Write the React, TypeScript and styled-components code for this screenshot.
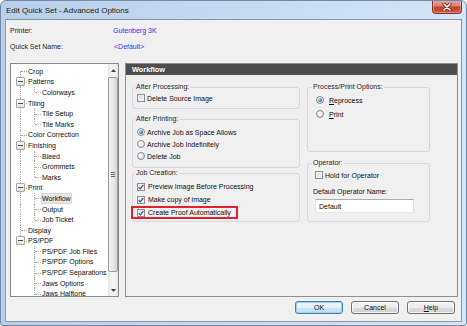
import React from 'react';
import styled, { createGlobalStyle, css } from 'styled-components';

const FONT = `"Liberation Sans", Arial, sans-serif`;

const GlobalStyle = createGlobalStyle`
  html, body { margin: 0; padding: 0; background: #ffffff; }
  body { font-family: ${FONT}; font-size: 7px; color: #0e0e0e; }
  * { box-sizing: border-box; }
`;

const Window = styled.div`
  width: 467px;
  height: 326px;
  border: 1px solid #6f8aae;
  border-radius: 6px 6px 3px 3px;
  background: linear-gradient(to right, #b8cfe9 0%, #c6daf0 50%, #d5e5f6 100%);
  padding: 0 4px 3px 4px;
  display: flex;
  flex-direction: column;
  overflow: hidden;
`;

const TitleBar = styled.div`
  height: 18px;
  flex: none;
  display: flex;
  align-items: center;
  padding-left: 1px;
`;

const Title = styled.span`
  flex: 1;
  font-size: 8px;
  color: #1a1a1a;
`;

const CloseButton = styled.div`
  align-self: flex-start;
  margin-top: -1px;
  width: 30px;
  height: 14px;
  border: 1px solid #84332a;
  border-top: none;
  border-radius: 0 0 4px 4px;
  background: linear-gradient(to bottom, #e8a79c 0%, #d9806f 45%, #c2402e 55%, #cf5a45 100%);
  box-shadow: inset 0 0 0 1px rgba(255, 255, 255, 0.3);
  display: flex;
  align-items: center;
  justify-content: center;
`;

const Client = styled.div`
  flex: 1;
  background: #f0f0f0;
  border: 1px solid #8596ad;
  padding: 2px 3px 7px 4px;
  display: flex;
  flex-direction: column;
`;

const InfoGrid = styled.div`
  display: grid;
  grid-template-columns: 103px 1fr;
  grid-auto-rows: 16px;
  align-items: center;
`;

const InfoLabel = styled.span`
  color: #1a1a1a;
`;

const InfoValue = styled.span<{ $shift?: number }>`
  color: #3535ea;
  padding-left: ${(p) => p.$shift ?? 0}px;
`;

const Main = styled.div`
  display: flex;
  gap: 6px;
  margin-top: 9px;
  height: 234px;
  flex: none;
`;

/* ---------- tree ---------- */

const TreeBox = styled.div`
  width: 109px;
  flex: none;
  border: 1px solid #828790;
  background: #ffffff;
  display: flex;
  overflow: hidden;
`;

const TreeList = styled.div`
  flex: 1;
  padding: 2px 0 0 2px;
  overflow: hidden;
`;

const TreeRow = styled.div`
  display: flex;
  height: 10.6px;
`;

const LINE = '#a8a8a8';

const Indent = styled.span<{ $line?: boolean }>`
  position: relative;
  width: 14px;
  height: 100%;
  flex: none;
  ${(p) =>
    p.$line &&
    css`
      &::before {
        content: '';
        position: absolute;
        left: 7px;
        top: 0;
        bottom: 0;
        border-left: 1px dotted ${LINE};
      }
    `}
`;

const Connector = styled.span<{ $first?: boolean; $last?: boolean }>`
  position: relative;
  width: 14px;
  height: 100%;
  flex: none;
  display: flex;
  align-items: center;
  &::before {
    content: '';
    position: absolute;
    left: 7px;
    top: ${(p) => (p.$first ? '50%' : '0')};
    bottom: ${(p) => (p.$last ? '50%' : '0')};
    border-left: 1px dotted ${LINE};
  }
  &::after {
    content: '';
    position: absolute;
    left: 8px;
    right: 0;
    top: 50%;
    border-top: 1px dotted ${LINE};
  }
`;

const Expander = styled.span`
  position: relative;
  z-index: 1;
  margin-left: 3px;
  width: 9px;
  height: 9px;
  border: 1px solid #a6a6a6;
  border-radius: 1px;
  background: linear-gradient(to bottom, #ffffff, #e2e2e2);
  display: flex;
  align-items: center;
  justify-content: center;
  &::after {
    content: '';
    width: 5px;
    height: 1px;
    background: #4a4a4a;
  }
`;

const NodeLabel = styled.span<{ $selected?: boolean }>`
  height: 100%;
  padding: 0 1px;
  display: flex;
  align-items: center;
  white-space: nowrap;
  ${(p) =>
    p.$selected &&
    css`
      background: #e7e7e7;
      box-shadow: inset 0 0 0 1px #d8d8d8;
      border-radius: 2px;
    `}
`;

const ScrollBar = styled.div`
  width: 10px;
  flex: none;
  display: flex;
  flex-direction: column;
  background: linear-gradient(to right, #e4e4e4, #f3f3f3 30%, #f3f3f3 70%, #e7e7e7);
`;

const ScrollArrow = styled.div`
  height: 12px;
  flex: none;
  display: flex;
  align-items: center;
  justify-content: center;
`;

const ScrollTrack = styled.div`
  flex: 1;
  padding-top: 1px;
`;

const Thumb = styled.div`
  height: 195px;
  border: 1px solid #9a9a9a;
  border-radius: 2px;
  background: linear-gradient(to right, #f3f3f3, #e6e6e6 50%, #d8d8d8);
  display: flex;
  align-items: center;
  justify-content: center;
`;

const Grip = styled.span`
  width: 4px;
  height: 5px;
  background: repeating-linear-gradient(to bottom, #6c6c6c 0 1px, transparent 1px 2px);
`;

/* ---------- panel ---------- */

const Panel = styled.section`
  width: 333px;
  flex: none;
  border: 1px solid #8e8e8e;
  background: #f0f0f0;
  display: flex;
  flex-direction: column;
`;

const PanelHeader = styled.div`
  height: 11px;
  flex: none;
  background: #4e4e4e;
  color: #ffffff;
  font-weight: bold;
  font-size: 7.4px;
  padding-left: 6px;
  display: flex;
  align-items: center;
`;

const PanelBody = styled.div`
  display: grid;
  grid-template-columns: 168px 123px;
  column-gap: 7px;
  padding-left: 6px;
  align-items: start;
`;

const Column = styled.div`
  display: flex;
  flex-direction: column;
`;

const Group = styled.div<{ $mt: number; $pl: number; $pb: number }>`
  margin-top: ${(p) => p.$mt}px;
  border: 1px solid #d5d9dd;
  border-radius: 3px;
  padding: 0 4px ${(p) => p.$pb}px ${(p) => p.$pl}px;
  display: flex;
  flex-direction: column;
`;

const Legend = styled.div<{ $ml: number }>`
  align-self: flex-start;
  margin: -6px 0 0 ${(p) => p.$ml}px;
  height: 10px;
  line-height: 10px;
  padding: 0 1px;
  background: #f0f0f0;
  color: #1e1e1e;
  white-space: nowrap;
`;

const OptionList = styled.div<{ $mt: number }>`
  margin-top: ${(p) => p.$mt}px;
  display: flex;
  flex-direction: column;
`;

const OptionRow = styled.div<{ $h: number; $gap: number }>`
  position: relative;
  height: ${(p) => p.$h}px;
  display: flex;
  align-items: center;
  gap: ${(p) => p.$gap}px;
  white-space: nowrap;
`;

const Highlight = styled.span`
  position: absolute;
  left: -6px;
  top: 0;
  width: 107px;
  height: 13px;
  border: 2px solid #e3232c;
  pointer-events: none;
`;

const CheckBox = styled.span`
  width: 8px;
  height: 8px;
  flex: none;
  border: 1px solid #8e8f8f;
  background: linear-gradient(135deg, #d4d4d4 0%, #ececec 60%, #f8f8f8 100%);
  box-shadow: inset 0 0 0 1px #f3f3f3;
  display: flex;
  align-items: center;
  justify-content: center;
`;

const RadioMark = styled.span<{ $checked?: boolean }>`
  width: 8px;
  height: 8px;
  flex: none;
  border-radius: 50%;
  border: 1px solid #8b8b8b;
  background: radial-gradient(circle at 35% 35%, #fdfdfd, #e3e3e3 65%, #cdcdcd);
  display: flex;
  align-items: center;
  justify-content: center;
  ${(p) =>
    p.$checked &&
    css`
      &::after {
        content: '';
        width: 4px;
        height: 4px;
        border-radius: 50%;
        background: radial-gradient(circle at 35% 35%, #a6e2ff, #2f84c8 55%, #154f86);
      }
    `}
`;

const FieldLabel = styled.div`
  margin: 5px 0 0 -2px;
  height: 11px;
  line-height: 11px;
  white-space: nowrap;
`;

const TextField = styled.input`
  margin-top: 2px;
  width: 99px;
  height: 14px;
  border: 1px solid #abadb3;
  border-color: #abadb3 #dbdfe6 #e3e9ef #e2e3ea;
  padding: 0 3px;
  font: 7px ${FONT};
  color: #0e0e0e;
  background: #ffffff;
  outline: none;
`;

const Key = styled.span`
  text-decoration: underline;
`;

/* ---------- buttons ---------- */

const ButtonRow = styled.div`
  margin-top: 4px;
  display: flex;
  justify-content: flex-end;
  gap: 8px;
  padding-right: 3px;
`;

const DialogButton = styled.button<{ $default?: boolean }>`
  width: 48px;
  height: 13px;
  padding: 0;
  font: 7px ${FONT};
  color: #0e0e0e;
  border: 1px solid #707070;
  border-radius: 3px;
  background: linear-gradient(to bottom, #f2f2f2 0%, #ebebeb 50%, #dddddd 51%, #cfcfcf 100%);
  box-shadow: inset 0 0 0 1px rgba(255, 255, 255, 0.75);
  ${(p) =>
    p.$default &&
    css`
      border-color: #3c7fb1;
      background: linear-gradient(to bottom, #edf6fb 0%, #e2eff7 50%, #d2e5f1 51%, #c3dcec 100%);
      box-shadow: inset 0 0 0 1px #9fd2f0;
    `}
`;

/* ---------- data ---------- */

type TreeNode = { label: string; children?: string[]; more?: boolean };

const TREE: TreeNode[] = [
  { label: 'Crop' },
  { label: 'Patterns', children: ['Colorways'] },
  { label: 'Tiling', children: ['Tile Setup', 'Tile Marks'] },
  { label: 'Color Correction' },
  { label: 'Finishing', children: ['Bleed', 'Grommets', 'Marks'] },
  { label: 'Print', children: ['Workflow', 'Output', 'Job Ticket'] },
  { label: 'Display' },
  {
    label: 'PS/PDF',
    children: ['PS/PDF Job Files', 'PS/PDF Options', 'PS/PDF Separations', 'Jaws Options', 'Jaws Halftone'],
    more: true,
  },
];

const CheckIcon = () => (
  <svg width="6" height="6" viewBox="0 0 6 6">
    <path d="M0.6 3.1 L2.3 4.9 L5.4 0.8" fill="none" stroke="#3d5283" strokeWidth="1.2" />
  </svg>
);

const CloseIcon = () => (
  <svg width="10" height="8" viewBox="0 0 10 8">
    <path d="M2 1 L8 7 M8 1 L2 7" stroke="#5b1b14" strokeWidth="3" strokeLinecap="round" />
    <path d="M2 1 L8 7 M8 1 L2 7" stroke="#ffffff" strokeWidth="1.6" strokeLinecap="round" />
  </svg>
);

const ArrowIcon = ({ up }: { up?: boolean }) => (
  <svg width="5" height="3" viewBox="0 0 5 3">
    <polygon points={up ? '0,3 5,3 2.5,0' : '0,0 5,0 2.5,3'} fill="#404040" />
  </svg>
);

const Tree = () => (
  <TreeBox>
    <TreeList>
      {TREE.map((node, i) => {
        const lastRoot = i === TREE.length - 1;
        return (
          <React.Fragment key={node.label}>
            <TreeRow>
              <Connector $first={i === 0} $last={lastRoot}>
                {node.children && <Expander />}
              </Connector>
              <NodeLabel>{node.label}</NodeLabel>
            </TreeRow>
            {node.children?.map((child, j) => (
              <TreeRow key={child}>
                <Indent $line={!lastRoot} />
                <Connector $last={j === node.children!.length - 1 && !node.more} />
                <NodeLabel $selected={child === 'Workflow'}>{child}</NodeLabel>
              </TreeRow>
            ))}
          </React.Fragment>
        );
      })}
    </TreeList>
    <ScrollBar>
      <ScrollArrow>
        <ArrowIcon up />
      </ScrollArrow>
      <ScrollTrack>
        <Thumb>
          <Grip />
        </Thumb>
      </ScrollTrack>
      <ScrollArrow>
        <ArrowIcon />
      </ScrollArrow>
    </ScrollBar>
  </TreeBox>
);

const Check = ({ label, checked, gap = 2, h, highlight }: { label: string; checked?: boolean; gap?: number; h: number; highlight?: boolean }) => (
  <OptionRow $h={h} $gap={gap}>
    <CheckBox>{checked && <CheckIcon />}</CheckBox>
    <span>{label}</span>
    {highlight && <Highlight />}
  </OptionRow>
);

const Radio = ({ children, checked, gap = 2, h }: { children: React.ReactNode; checked?: boolean; gap?: number; h: number }) => (
  <OptionRow $h={h} $gap={gap}>
    <RadioMark $checked={checked} />
    <span>{children}</span>
  </OptionRow>
);

export default function App() {
  return (
    <>
      <GlobalStyle />
      <Window>
        <TitleBar>
          <Title>Edit Quick Set - Advanced Options</Title>
          <CloseButton>
            <CloseIcon />
          </CloseButton>
        </TitleBar>
        <Client>
          <InfoGrid>
            <InfoLabel>Printer:</InfoLabel>
            <InfoValue>Gutenberg 3K</InfoValue>
            <InfoLabel>Quick Set Name:</InfoLabel>
            <InfoValue $shift={1}>&lt;Default&gt;</InfoValue>
          </InfoGrid>
          <Main>
            <Tree />
            <Panel>
              <PanelHeader>Workflow</PanelHeader>
              <PanelBody>
                <Column>
                  <Group $mt={12} $pl={4} $pb={4}>
                    <Legend $ml={-2}>After Processing:</Legend>
                    <OptionList $mt={0}>
                      <Check h={12} label="Delete Source Image" />
                    </OptionList>
                  </Group>
                  <Group $mt={10} $pl={4} $pb={5}>
                    <Legend $ml={-2}>After Printing:</Legend>
                    <OptionList $mt={2}>
                      <Radio h={12} checked>Archive Job as Space Allows</Radio>
                      <Radio h={12}>Archive Job Indefinitely</Radio>
                      <Radio h={12}>Delete Job</Radio>
                    </OptionList>
                  </Group>
                  <Group $mt={5} $pl={4} $pb={2}>
                    <Legend $ml={-2}>Job Creation:</Legend>
                    <OptionList $mt={2}>
                      <Check h={13} gap={3} checked label="Preview Image Before Processing" />
                      <Check h={13} gap={3} checked label="Make copy of image" />
                      <Check h={13} gap={3} checked highlight label="Create Proof Automatically" />
                    </OptionList>
                  </Group>
                </Column>
                <Column>
                  <Group $mt={12} $pl={8} $pb={30}>
                    <Legend $ml={-4}>Process/Print Options:</Legend>
                    <OptionList $mt={1}>
                      <Radio h={14} gap={5} checked>
                        <Key>R</Key>eprocess
                      </Radio>
                      <Radio h={14} gap={5}>
                        <Key>P</Key>rint
                      </Radio>
                    </OptionList>
                  </Group>
                  <Group $mt={11} $pl={7} $pb={8}>
                    <Legend $ml={-3}>Operator:</Legend>
                    <OptionList $mt={1}>
                      <Check h={12} label="Hold for Operator" />
                    </OptionList>
                    <FieldLabel>Default Operator Name:</FieldLabel>
                    <TextField value="Default" readOnly />
                  </Group>
                </Column>
              </PanelBody>
            </Panel>
          </Main>
          <ButtonRow>
            <DialogButton $default>OK</DialogButton>
            <DialogButton>Cancel</DialogButton>
            <DialogButton>
              <Key>H</Key>elp
            </DialogButton>
          </ButtonRow>
        </Client>
      </Window>
    </>
  );
}
